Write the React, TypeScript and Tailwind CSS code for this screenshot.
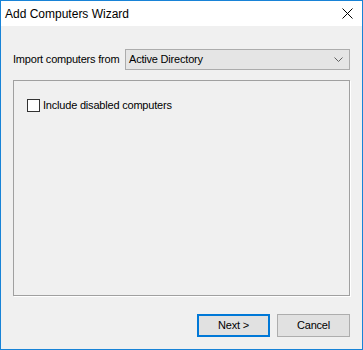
import React, { useState } from "react";

export default function App() {
  const [includeDisabled, setIncludeDisabled] = useState(false);
  return (
    <div className="w-[363px] h-[350px] flex flex-col border border-[#1883d7] bg-[#f0f0f0] text-black font-['Liberation_Sans',Arial,sans-serif]">
      {/* Title bar */}
      <div className="h-[25px] bg-white flex items-center justify-between pl-[4px] pr-[9px] text-[12px]">
        <span className="leading-none">Add Computers Wizard</span>
        <svg width="11" height="11" viewBox="0 0 11 11">
          <path d="M0.5 0.5 L10.5 10.5 M10.5 0.5 L0.5 10.5" stroke="#000" strokeWidth="1" />
        </svg>
      </div>

      {/* Body */}
      <div className="flex-1 flex flex-col px-[12px] pt-[23px] pb-[12px] text-[11px] tracking-[-0.2px]">
        <div className="flex items-center h-[21px]">
          <span className="w-[112px] shrink-0 whitespace-nowrap">Import computers from</span>
          <div className="flex-1 h-[21px] flex items-center justify-between bg-[#e5e5e5] border border-[#acacac] pl-[3px] pr-[6px]">
            <span>Active Directory</span>
            <svg width="9" height="6" viewBox="0 0 9 6">
              <path d="M0.5 0.5 L4.5 4.5 L8.5 0.5" stroke="#606060" fill="none" strokeWidth="1" />
            </svg>
          </div>
        </div>

        {/* Group box */}
        <div className="mt-[10px] h-[216px] border border-[#a0a0a0] shadow-[1px_1px_0_#ffffff] pl-[13px] pt-[16px]">
          <label className="flex items-center gap-[3px] cursor-default">
            <span
              onClick={() => setIncludeDisabled(!includeDisabled)}
              className="w-[13px] h-[13px] border border-[#333333] bg-white flex items-center justify-center"
            >
              {includeDisabled && (
                <svg width="9" height="9" viewBox="0 0 9 9">
                  <path d="M1 4.5 L3.5 7 L8 1.5" stroke="#000" fill="none" strokeWidth="1.3" />
                </svg>
              )}
            </span>
            <span>Include disabled computers</span>
          </label>
        </div>

        <div className="flex-1" />

        <div className="flex justify-end gap-[7px]">
          <button className="w-[73px] h-[23px] bg-[#e1e1e1] border-2 border-[#0078d7]">Next &gt;</button>
          <button className="w-[73px] h-[23px] bg-[#e1e1e1] border border-[#adadad]">Cancel</button>
        </div>
      </div>
    </div>
  );
}
